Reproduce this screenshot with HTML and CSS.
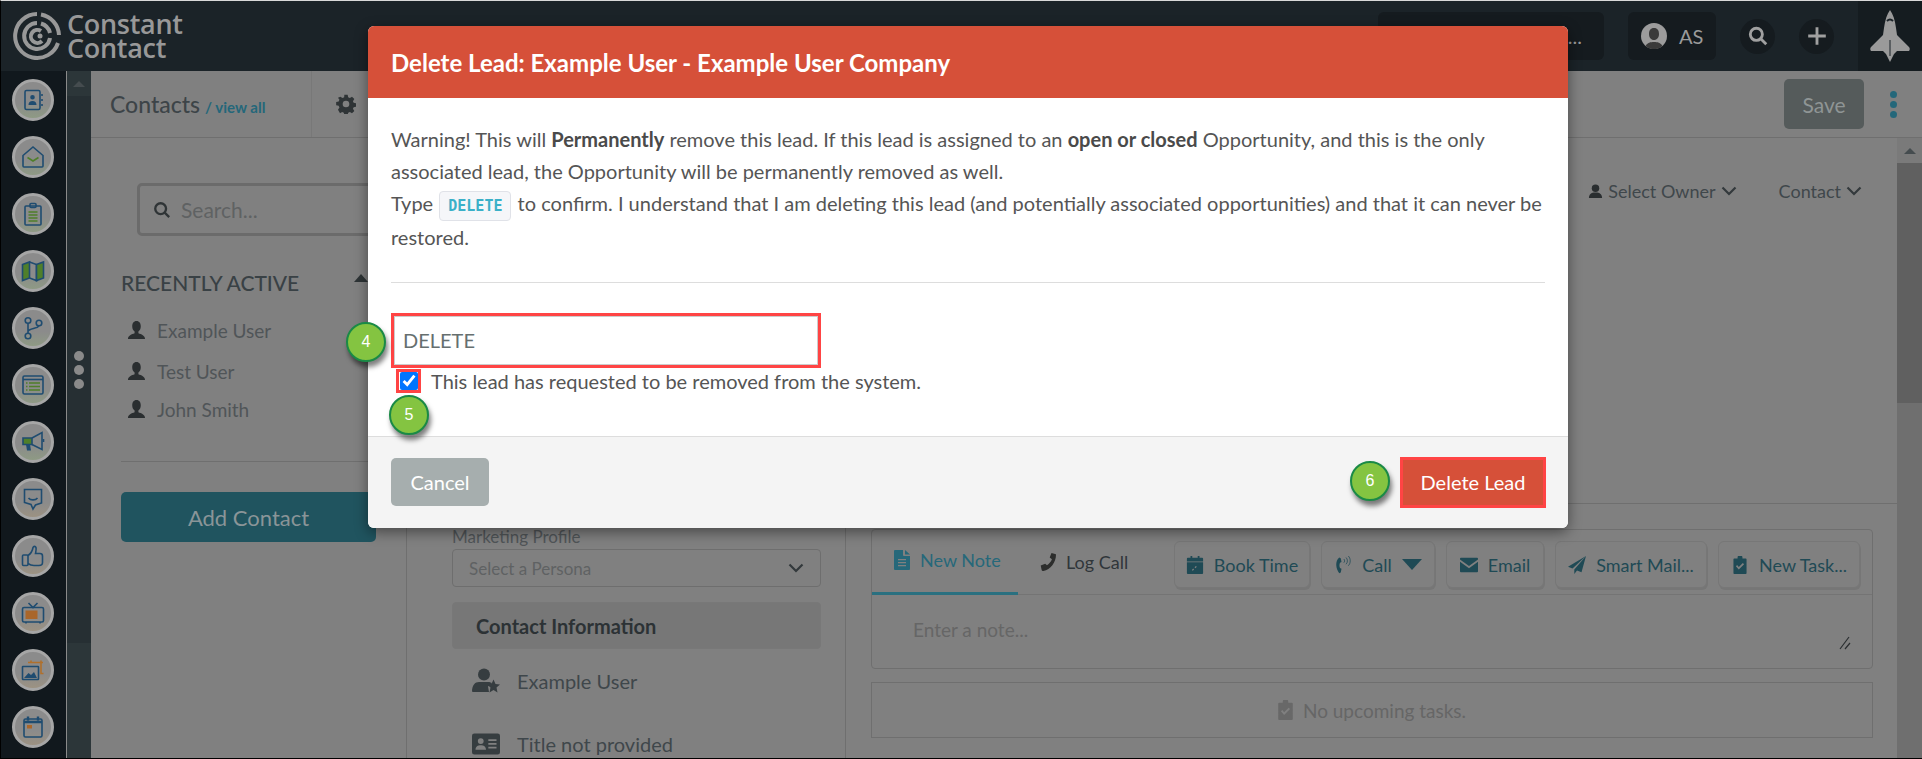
FILE: index.html
```html
<!DOCTYPE html>
<html lang="en">
<head>
    <meta charset="UTF-8">
    <meta name="viewport" content="width=device-width, initial-scale=1.0">
    <title>Delete Lead</title>
    <link rel="stylesheet" href="styles.css">
</head>
<body>
<div class="app">
    <header class="topbar">
        <div class="logo">
            <svg class="logo-mark" viewBox="0 0 50 50">
                <path d="M25 3 A22 22 0 1 0 46 32" />
                <path d="M29 3.500 A22 22 0 0 1 47 24" />
                <path d="M25 12 A13 13 0 1 0 38 27" />
                <path d="M29 12.500 A13 13 0 0 1 38 22" />
                <path d="M29 20 A6.500 6.500 0 1 0 30 30" />
                <circle class="logo-dot" cx="28" cy="25" r="2.500" />
            </svg>
            <div class="logo-text">Constant<br>Contact</div>
        </div>
        <div class="top-box top-search">...</div>
        <div class="top-box top-user">
            <svg class="avatar" viewBox="0 0 26 26">
                <circle cx="13" cy="13" r="13" fill="#9c9c9c" />
                <path d="M13 5c-3.500 0-5 2.500-5 6s2 6 5 6 5-2.500 5-6-1.500-6-5-6zM4.500 23c2-3.500 5-4 8.500-4s6.500.5 8.500 4a13 13 0 0 1-17 0z" fill="#3a3a3a" />
            </svg>
            AS
        </div>
        <div class="top-round">
            <svg viewBox="0 0 20 20"><circle cx="8.500" cy="8.500" r="5.500" /><path d="M12.500 12.500 L17.500 17.500" /></svg>
        </div>
        <div class="top-round">
            <svg viewBox="0 0 20 20"><path d="M10 2 V18 M2 10 H18" /></svg>
        </div>
        <div class="rocket">
            <svg viewBox="0 0 40 52">
                <path d="M20 0c3 4 5 10 6 18l1 7 12 12c1 1 1 3 0 4H27l-3 3-4 8-4-8-3-3H1c-1-1-1-3 0-4l12-12 1-7c1-8 3-14 6-18z" fill="#9a9a9a" />
                <path d="M17 11 Q20 8 23 11" stroke="#1b2328" stroke-width="2" fill="none" />
                <path d="M20 30 V46" stroke="#1b2328" stroke-width="1" />
            </svg>
        </div>
    </header>

    <div class="workspace">
        <nav class="rail">
            <a class="nav-btn tint-g"><svg viewBox="0 0 24 24"><rect x="4" y="2.500" width="15" height="19" rx="1.500" /><path class="solid" d="M11.500 7a2.300 2.300 0 1 1 0 4.600 2.300 2.300 0 0 1 0-4.600zM7.500 17c0-2.500 1.500-4 4-4s4 1.500 4 4z" /><path d="M21 6v2M21 11v2M21 16v2" /></svg></a>
            <a class="nav-btn tint-g"><svg viewBox="0 0 24 24"><path d="M2 10.500 L12 2 L22 10.500 V21 a1 1 0 0 1-1 1 H3 a1 1 0 0 1-1-1 Z" /><path class="acc-g" d="M6.500 12.500 L12 16 L17.500 12.500" /></svg></a>
            <a class="nav-btn tint-g"><svg viewBox="0 0 24 24"><rect x="4" y="4" width="16" height="19" rx="1" /><rect x="9" y="1.500" width="6" height="4" rx="1" /><path class="acc-g" d="M7.500 10h9M7.500 13h9M7.500 16h9M7.500 19h9" /></svg></a>
            <a class="nav-btn tint-g"><svg viewBox="0 0 24 24"><path class="fill-g" d="M1.500 5.500 L8.500 3 V19 L1.500 21.500 Z" /><path d="M8.500 3 L15.500 5.500 V21.500 L8.500 19" /><path class="fill-g" d="M15.500 5.500 L22.500 3 V19 L15.500 21.500 Z" /></svg></a>
            <a class="nav-btn tint-g"><svg viewBox="0 0 24 24"><circle cx="7" cy="4.500" r="2.800" /><circle cx="7" cy="20" r="2.800" /><circle cx="18" cy="7" r="2.800" /><path d="M7 7.300 V17.200 M7 15.500 C8 12 16 13 18 9.800" /></svg></a>
            <a class="nav-btn tint-g"><svg viewBox="0 0 24 24"><rect x="2" y="3" width="20" height="18" rx="1.500" /><path d="M2 6.500h20" /><path class="acc-g" d="M5 10h1.500M8 10h11M5 13.500h1.500M8 13.500h11M5 17h1.500M8 17h11" /></svg></a>
            <a class="nav-btn tint-g"><svg viewBox="0 0 24 24"><path d="M11 8 L21 2.500 V19.500 L11 14.500" /><path class="fill-g" d="M2 8h9v6.500H2z" /><path class="solid" d="M5 14.500h4l1 6H6z" /><path d="M22.500 9v3" /></svg></a>
            <a class="nav-btn tint-o"><svg viewBox="0 0 24 24"><path d="M3.500 2.500h17v13.500l-6 2-2.500 4-2-4.500-6.500-2z" /><path d="M8 7.500v.1M16 7.500v.1M7.500 11c2 2.500 7 2.500 9 0" /></svg></a>
            <a class="nav-btn tint-o"><svg viewBox="0 0 24 24"><rect x="1.500" y="11" width="5.500" height="10.500" rx="1" /><path d="M7 19.500c2 1.500 3 2 6 2h5c2 0 3.500-1 3.500-3V12c0-1.500-1-2.500-2.500-2.500h-4.500c.5-2.500 1-4 .5-6-.5-1.500-2.500-1.500-3 0-.5 3-2 6-5 8" /></svg></a>
            <a class="nav-btn tint-o"><svg viewBox="0 0 24 24"><path d="M7.500 2 L12 6.500 L16.500 2" /><rect x="1.500" y="6.500" width="21" height="14.500" rx="1.500" /><rect class="fill-o" x="4.500" y="9.500" width="12" height="8.500" /><path d="M19.500 10v.1M19.500 13v.1M19.500 16v.1M5 21v1.500M19 21v1.500" /></svg></a>
            <a class="nav-btn tint-o"><svg viewBox="0 0 24 24"><path class="acc-o" d="M7 4.500h15M20 2.500v13h2.500M10 2.500v2" /><rect x="1.500" y="8.500" width="16" height="13" rx=".5" /><path class="solid" d="M3 20l4.500-5 2.500 2 3-3 3 6z" /></svg></a>
            <a class="nav-btn tint-o"><svg viewBox="0 0 24 24"><rect x="3" y="4" width="18" height="18" rx="1.500" /><path d="M7 1.500v4M17 1.500v4M3 7h18" stroke-width="2.400" /><rect class="fill-o" x="6" y="10" width="5" height="3.500" /></svg></a>
        </nav>

        <div class="rail-scroll">
            <div class="rail-cap"><span class="tri-up"></span></div>
            <div class="rail-handle"><span></span><span></span><span></span></div>
            <div class="rail-cap rail-cap-bottom"></div>
        </div>

        <main class="content">
            <div class="content-head">
                <div class="contacts-title">Contacts <a>/ view all</a></div>
                <svg class="gear" viewBox="0 0 24 24"><path d="M10 1h4l.6 3 2 .9 2.600-1.700 2.800 2.800-1.700 2.600.9 2 3 .6v4l-3 .6-.9 2 1.700 2.600-2.800 2.800-2.600-1.700-2 .9-.6 3h-4l-.6-3-2-.9-2.600 1.700L2.400 18.800l1.700-2.600-.9-2-3-.6v-4l3-.6.9-2-1.700-2.600L5.200 3.200l2.600 1.700 2-.9zM12 8a4 4 0 1 0 0 8 4 4 0 0 0 0-8z" fill-rule="evenodd" /></svg>
                <button class="save-btn">Save</button>
                <div class="more"><span></span><span></span><span></span></div>
            </div>

            <div class="content-body">
                <aside class="contacts-col">
                    <div class="search-box">
                        <svg viewBox="0 0 20 20"><circle cx="8.500" cy="8.500" r="6" /><path d="M13 13 L18 18" /></svg>
                        <span>Search...</span>
                    </div>
                    <div class="recent-head">RECENTLY ACTIVE <span class="tri-dark"></span></div>
                    <div class="recent-row">
                        <svg viewBox="0 0 20 22"><path d="M10 1c-3 0-4.500 2.500-4.500 5.500 0 2.500 1 4.500 2.500 5.500v2c-3 1-7 2.500-7 6h18c0-3.500-4-5-7-6v-2c1.500-1 2.500-3 2.500-5.500C14.500 3.500 13 1 10 1z" /></svg>
                        Example User
                    </div>
                    <div class="recent-row recent-row-gap">
                        <svg viewBox="0 0 20 22"><path d="M10 1c-3 0-4.500 2.500-4.500 5.500 0 2.500 1 4.500 2.500 5.500v2c-3 1-7 2.500-7 6h18c0-3.500-4-5-7-6v-2c1.500-1 2.500-3 2.500-5.500C14.500 3.500 13 1 10 1z" /></svg>
                        Test User
                    </div>
                    <div class="recent-row">
                        <svg viewBox="0 0 20 22"><path d="M10 1c-3 0-4.500 2.500-4.500 5.500 0 2.500 1 4.500 2.500 5.500v2c-3 1-7 2.500-7 6h18c0-3.500-4-5-7-6v-2c1.500-1 2.500-3 2.500-5.500C14.500 3.500 13 1 10 1z" /></svg>
                        John Smith
                    </div>
                    <hr class="recent-line">
                    <button class="add-contact">Add Contact</button>
                </aside>

                <section class="profile-col">
                    <div class="field-label">Marketing Profile</div>
                    <div class="persona-select">
                        Select a Persona
                        <svg viewBox="0 0 16 10"><path d="M1.500 1.500 L8 8 L14.500 1.500" /></svg>
                    </div>
                    <div class="section-bar">Contact Information</div>
                    <div class="info-row">
                        <svg viewBox="0 0 28 26"><circle cx="12" cy="6.500" r="6" /><path d="M0 24c0-7 3-10 7-10h9c2 0 3.500.5 4 1.500l-4 3 1 5.500H1a1 1 0 0 1-1-1z" /><path d="M21.500 11.500l2 4.500 4.500.5-3.500 3 1 5-4-2.500-4 2.500 1-5-3.500-3 4.500-.5z" /></svg>
                        Example User
                    </div>
                    <div class="info-row info-row-next">
                        <svg viewBox="0 0 24 18"><path fill-rule="evenodd" d="M2 0h20a2 2 0 0 1 2 2v14a2 2 0 0 1-2 2H2a2 2 0 0 1-2-2V2a2 2 0 0 1 2-2zM7.500 4a2.500 2.500 0 1 0 0 5 2.500 2.500 0 0 0 0-5zM3 14h9c0-3-2-4-4.500-4S3 11 3 14zM14 5v1.500h7V5zM14 8.200v1.500h7V8.200zM14 11.400v1.500h7v-1.500z" /></svg>
                        Title not provided
                    </div>
                </section>

                <section class="activity-col">
                    <div class="lead-panel">
                        <div class="lead-meta">
                            <svg class="owner-icon" viewBox="0 0 16 16"><circle cx="8" cy="4.500" r="4" /><path d="M1 15c0-4 2-6 7-6s7 2 7 6z" /></svg>
                            <span>Select Owner</span>
                            <svg class="chev" viewBox="0 0 16 10"><path d="M1.500 1.500 L8 8 L14.500 1.500" /></svg>
                            <span class="lead-type">Contact</span>
                            <svg class="chev" viewBox="0 0 16 10"><path d="M1.500 1.500 L8 8 L14.500 1.500" /></svg>
                        </div>
                    </div>

                    <div class="note-card">
                        <div class="note-tabs">
                            <div class="tab tab-active">
                                <svg viewBox="0 0 16 20"><path fill-rule="evenodd" d="M0 1a1 1 0 0 1 1-1h8v5a1 1 0 0 0 1 1h6v13a1 1 0 0 1-1 1H1a1 1 0 0 1-1-1zM4 9v1.300h8V9zM4 12v1.300h8V12zM4 15v1.300h8V15z" /><path d="M11 0l5 4.500h-5z" /></svg>
                                New Note
                            </div>
                            <div class="tab tab-call">
                                <svg viewBox="0 0 20 20"><path d="M19 1l-4-1-2 5 2.500 2c-1 2.500-3 5-5.500 6.500L8 12l-5 2 1 4.500C4 19.500 5 20 6 20 14 19 20 10 20 2c0-.5-.5-1-1-1z" /></svg>
                                Log Call
                            </div>
                            <div class="tab-actions">
                                <button class="action-btn btn-book">
                                    <svg viewBox="0 0 18 20"><path fill-rule="evenodd" d="M4 0h2v2h6V0h2v2h3a1 1 0 0 1 1 1v3H0V3a1 1 0 0 1 1-1h3zM0 7h18v12a1 1 0 0 1-1 1H1a1 1 0 0 1-1-1zM7 14l-1.500 1.500 1 1L8 15zM10 11l-1.500 1.500 1 1L11 12z" /></svg>
                                    Book Time
                                </button>
                                <button class="action-btn btn-call">
                                    <svg viewBox="0 0 18 24"><path d="M6 3l-2-1C1 4 0 8 0 12s2 8 4 11l2-1 1-5-2-1c-1-2-1-5 0-7l2-1z" /><path class="line" d="M10 4c1.500 1 1.500 4 0 5M13 2c2.500 2 2.500 7 0 9M16 0c3.500 3 3.500 10 0 13" /></svg>
                                    Call
                                    <span class="tri-down"></span>
                                </button>
                                <button class="action-btn btn-email">
                                    <svg viewBox="0 0 20 16"><path d="M1 0h18a1 1 0 0 1 1 1v1l-10 7L0 2V1a1 1 0 0 1 1-1z" /><path d="M0 4.500l10 7 10-7V15a1 1 0 0 1-1 1H1a1 1 0 0 1-1-1z" /></svg>
                                    Email
                                </button>
                                <button class="action-btn btn-mail">
                                    <svg viewBox="0 0 20 20"><path d="M20 0L0 12l5 2zM20 0L7 15v5l3-4 5 2z" /></svg>
                                    Smart Mail...
                                </button>
                                <button class="action-btn btn-task">
                                    <svg viewBox="0 0 16 22"><path fill-rule="evenodd" d="M5 3V2a3 3 0 0 1 6 0v1h4a1 1 0 0 1 1 1v17a1 1 0 0 1-1 1H1a1 1 0 0 1-1-1V4a1 1 0 0 1 1-1zM3 12.500l3.500 4L13 10l-1.500-1.500-5 5L4.500 11z" /></svg>
                                    New Task...
                                </button>
                            </div>
                        </div>
                        <div class="note-entry">
                            Enter a note...
                            <svg class="resize" viewBox="0 0 12 14"><path d="M1 13 L10 1 M6 13 L11 7" /></svg>
                        </div>
                    </div>

                    <div class="tasks-box">
                        <svg viewBox="0 0 16 22"><path fill-rule="evenodd" d="M5 3V2a3 3 0 0 1 6 0v1h4a1 1 0 0 1 1 1v17a1 1 0 0 1-1 1H1a1 1 0 0 1-1-1V4a1 1 0 0 1 1-1zM3 12.500l3.500 4L13 10l-1.500-1.500-5 5L4.500 11z" /></svg>
                        No upcoming tasks.
                    </div>
                </section>

                <div class="page-scroll">
                    <div class="page-scroll-btn"><span class="tri-up"></span></div>
                    <div class="page-scroll-thumb"></div>
                </div>
            </div>
        </main>
    </div>

    <!-- Delete dialog, sits over the whole page -->
    <div class="modal">
        <div class="modal-head">Delete Lead: Example User - Example User Company</div>
        <div class="modal-body">
            <p class="warning">
                Warning! This will <b>Permanently</b> remove this lead. If this lead is assigned to an <b>open or closed</b> Opportunity, and this is the only associated lead, the Opportunity will be permanently removed as well.<br>
                Type <code>DELETE</code> to confirm. I understand that I am deleting this lead (and potentially associated opportunities) and that it can never be restored.
            </p>
            <hr class="modal-line">
            <div class="confirm-input callout">
                <span class="badge badge-4">4</span>
                <input type="text" value="DELETE">
            </div>
            <div class="confirm-check">
                <span class="check-box callout">
                    <span class="badge badge-5">5</span>
                    <input type="checkbox" id="requested" checked>
                </span>
                <label for="requested">This lead has requested to be removed from the system.</label>
            </div>
        </div>
        <div class="modal-foot">
            <button class="cancel-btn">Cancel</button>
            <div class="delete-wrap">
                <span class="badge badge-6">6</span>
                <button class="delete-btn">Delete Lead</button>
            </div>
        </div>
    </div>
</div>
</body>
</html>
```

FILE: styles.css
```css
:root {
    --top-bg: #1b2328;
    --top-box: #151b1f;
    --rail-bg: #11181d;
    --rail-scroll: #262f33;
    --page-bg: #808080;
    --line: #6f6f6f;
    --text: #3d4448;
    --text-soft: #505558;
    --text-faint: #5f6263;
    --teal: #2a7080;
    --teal-dark: #1f4a55;
    --navy: #1f4c70;
    --red: #d65039;
    --callout: #ff4444;
}

* {
    box-sizing: border-box;
}

body {
    margin: 0;
    width: 1922px;
    height: 759px;
    overflow: hidden;
    border-top: 1px solid #d9d9d9;
    border-left: 1px solid #000;
    border-bottom: 1px solid #000;
    font-family: "Lato", "Liberation Sans", sans-serif;
    color: var(--text);
    background: var(--page-bg);
}

svg {
    display: block;
    flex: none;
}

.app {
    position: relative;
    height: 100%;
    display: flex;
    flex-direction: column;
    overflow: hidden;
}

/* Top bar */
.topbar {
    height: 70px;
    flex: none;
    display: flex;
    align-items: center;
    background: var(--top-bg);
}

.logo {
    display: flex;
    align-items: center;
    margin-left: 11px;
    gap: 5px;
}

.logo-mark {
    width: 50px;
    height: 50px;
    fill: none;
    stroke: #989898;
    stroke-width: 4;
}

.logo-mark .logo-dot {
    fill: #989898;
    stroke: none;
}

.logo-text {
    font-family: "Open Sans", sans-serif;
    font-size: 27px;
    line-height: 24px;
    font-weight: 600;
    color: #989898;
    letter-spacing: -0.3px;
}

.top-box {
    height: 48px;
    border-radius: 6px;
    background: var(--top-box);
    display: flex;
    align-items: center;
    color: #9a9a9a;
}

.top-search {
    width: 226px;
    margin-left: auto;
    justify-content: flex-end;
    padding-right: 22px;
    font-size: 20px;
}

.top-user {
    width: 88px;
    margin-left: 24px;
    padding-left: 13px;
    gap: 12px;
    font-size: 20px;
}

.avatar {
    width: 26px;
    height: 26px;
}

.top-round {
    width: 35px;
    height: 35px;
    margin-left: 24px;
    border-radius: 50%;
    background: var(--top-box);
    display: flex;
    align-items: center;
    justify-content: center;
}

.top-round svg {
    width: 22px;
    height: 22px;
    fill: none;
    stroke: #a0a0a0;
    stroke-width: 2.6;
}

.rocket {
    width: 64px;
    height: 100%;
    margin-left: 24px;
    background: #151c20;
    display: flex;
    align-items: center;
    justify-content: center;
}

.rocket svg {
    width: 40px;
    height: 52px;
}

/* Left navigation */
.workspace {
    flex: 1;
    min-height: 0;
    display: flex;
}

.rail {
    width: 66px;
    flex: none;
    display: flex;
    flex-direction: column;
    align-items: center;
    gap: 15px;
    padding-top: 8px;
    padding-right: 1px;
    background: var(--rail-bg);
    border-right: 1px solid #8a8a8a;
}

.nav-btn {
    width: 42px;
    height: 42px;
    flex: none;
    border-radius: 50%;
    border: 3px solid #a6a6a6;
    display: flex;
    align-items: center;
    justify-content: center;
}

.tint-g {
    background: linear-gradient(#8b8b8b, #8b8b8b 60%, #8e9a84);
}

.tint-o {
    background: linear-gradient(#8b8b8b, #8b8b8b 60%, #9c9282);
}

.nav-btn svg {
    width: 24px;
    height: 24px;
    fill: none;
    stroke: var(--navy);
    stroke-width: 1.6;
}

.nav-btn .solid {
    fill: var(--navy);
    stroke: none;
}

.nav-btn .acc-g {
    stroke: #4f7f2a;
}

.nav-btn .acc-o {
    stroke: #b0702c;
}

.nav-btn .fill-g {
    fill: #4f7f2a;
}

.nav-btn .fill-o {
    fill: #a9662a;
    stroke: none;
}

.rail-scroll {
    width: 24px;
    flex: none;
    display: flex;
    flex-direction: column;
    background: var(--rail-scroll);
}

.rail-cap {
    height: 25px;
    flex: none;
    background: #2c3639;
    display: flex;
    align-items: center;
    justify-content: center;
}

.rail-cap-bottom {
    flex: 1;
}

.rail-handle {
    flex: 1;
    display: flex;
    flex-direction: column;
    align-items: center;
    justify-content: center;
    gap: 4px;
}

.rail-handle span {
    width: 10px;
    height: 10px;
    border-radius: 50%;
    background: #8a8a8a;
}

.rail-cap-bottom {
    flex: none;
    height: 115px;
}

.tri-up {
    width: 0;
    height: 0;
    border-left: 6px solid transparent;
    border-right: 6px solid transparent;
    border-bottom: 6px solid #454c4f;
}

/* Main area */
.content {
    flex: 1;
    min-width: 0;
    display: flex;
    flex-direction: column;
}

.content-head {
    height: 67px;
    flex: none;
    display: flex;
    align-items: center;
    border-bottom: 1px solid var(--line);
}

.contacts-title {
    width: 221px;
    height: 100%;
    display: flex;
    align-items: center;
    gap: 5px;
    padding-left: 19px;
    border-right: 1px solid #787878;
    font-size: 23px;
    font-weight: 500;
    color: var(--text);
}

.contacts-title a {
    font-size: 15px;
    font-weight: 700;
    color: #24677a;
    padding-top: 5px;
}

.gear {
    width: 20px;
    height: 20px;
    margin-left: 24px;
    fill: #2f3436;
}

.save-btn {
    margin-left: auto;
    width: 80px;
    height: 50px;
    border: 0;
    border-radius: 5px;
    background: #555b5b;
    color: #8f9595;
    font-family: inherit;
    font-size: 21px;
}

.more {
    width: 58px;
    display: flex;
    flex-direction: column;
    align-items: center;
    gap: 3px;
}

.more span {
    width: 7px;
    height: 7px;
    border-radius: 50%;
    background: #24677a;
}

.content-body {
    flex: 1;
    min-height: 0;
    display: flex;
}

/* Contact list column */
.contacts-col {
    width: 316px;
    flex: none;
    padding: 45px 30px 0;
    border-right: 1px solid var(--line);
}

.search-box {
    height: 53px;
    width: 255px;
    margin-left: 16px;
    padding-left: 13px;
    display: flex;
    align-items: center;
    gap: 10px;
    border: 3px solid #6b6b6b;
    border-radius: 5px;
    font-size: 21px;
    color: var(--text-faint);
}

.search-box svg {
    width: 18px;
    height: 18px;
    fill: none;
    stroke: #2f3436;
    stroke-width: 2.6;
}

.recent-head {
    margin-top: 31px;
    height: 30px;
    width: 247px;
    display: flex;
    align-items: center;
    justify-content: space-between;
    font-size: 21px;
    font-weight: 500;
    color: #394145;
}

.tri-dark {
    width: 0;
    height: 0;
    border-left: 7px solid transparent;
    border-right: 7px solid transparent;
    border-bottom: 8px solid #2e3436;
    margin-bottom: 8px;
}

.recent-row {
    height: 38px;
    display: flex;
    align-items: center;
    gap: 11px;
    padding-left: 6px;
    font-size: 19px;
    color: var(--text-soft);
}

.recent-head + .recent-row {
    margin-top: 14px;
}

.recent-row-gap {
    margin-top: 3px;
}

.recent-row svg {
    width: 19px;
    height: 21px;
    fill: #2a2e30;
}

.recent-line {
    margin: 33px 0 30px;
    border: 0;
    border-top: 1px solid var(--line);
}

.add-contact {
    width: 255px;
    height: 50px;
    border: 0;
    border-radius: 5px;
    background: #20545f;
    color: #8a9598;
    font-family: inherit;
    font-size: 22px;
}

/* Middle column */
.profile-col {
    width: 439px;
    flex: none;
    padding: 387px 24px 0 45px;
    border-right: 1px solid var(--line);
}

.field-label {
    height: 24px;
    line-height: 24px;
    font-size: 17px;
    color: var(--text-soft);
}

.persona-select {
    height: 38px;
    padding: 0 16px;
    display: flex;
    align-items: center;
    justify-content: space-between;
    border: 1px solid #6e6e6e;
    border-radius: 4px;
    font-size: 17px;
    color: var(--text-faint);
}

.persona-select svg,
.chev {
    width: 16px;
    height: 10px;
    fill: none;
    stroke: #33393c;
    stroke-width: 2.2;
}

.section-bar {
    height: 47px;
    margin-top: 15px;
    padding-left: 23px;
    display: flex;
    align-items: center;
    border: 1px solid #787878;
    border-radius: 4px;
    background: #777;
    font-size: 20px;
    font-weight: 700;
    color: #2c3235;
}

.info-row {
    margin-top: 12px;
    height: 40px;
    display: flex;
    align-items: center;
    gap: 17px;
    padding-left: 20px;
    font-size: 20px;
    color: #3f474b;
}

.info-row svg {
    width: 28px;
    height: 26px;
    fill: #363d40;
}

.info-row-next {
    margin-top: 23px;
}

/* Right column */
.activity-col {
    flex: 1;
    min-width: 0;
}

.lead-panel {
    height: 366px;
    padding-top: 42px;
    border-bottom: 1px solid var(--line);
}

.lead-meta {
    display: flex;
    align-items: center;
    justify-content: flex-end;
    gap: 5px;
    padding-right: 35px;
    font-size: 18px;
    color: #3f474b;
}

.owner-icon {
    width: 15px;
    height: 15px;
    fill: #2a2e30;
}

.lead-type {
    margin-left: 37px;
}

.note-card {
    margin: 25px 24px 0 25px;
    height: 140px;
    border: 1px solid var(--line);
    border-radius: 4px;
}

.note-tabs {
    height: 65px;
    display: flex;
    border-bottom: 1px solid #747474;
}

.tab {
    height: 65px;
    display: flex;
    align-items: center;
    gap: 10px;
    font-size: 18px;
}

.tab svg {
    width: 16px;
    height: 20px;
}

.tab-active {
    width: 146px;
    padding: 0 0 2px 22px;
    border-bottom: 3px solid var(--teal);
    color: #26687a;
}

.tab-active svg {
    fill: #26687a;
}

.tab-call {
    margin-left: 20px;
    padding-bottom: 2px;
    color: #30363a;
}

.tab-call svg {
    width: 18px;
    height: 18px;
    fill: #2c2d2c;
}

.tab-actions {
    margin-left: auto;
    padding: 11px 12px 0 0;
    display: flex;
    gap: 11px;
}

.action-btn {
    height: 47px;
    padding: 0;
    display: flex;
    align-items: center;
    justify-content: center;
    gap: 10px;
    border: 1px solid #777;
    border-radius: 6px;
    box-shadow: 1px 2px 0 #767676;
    background: #808080;
    font-family: inherit;
    font-size: 18px;
    color: var(--teal-dark);
}

.action-btn svg {
    height: 18px;
    width: 18px;
    fill: var(--teal-dark);
}

.btn-book { width: 136px; }
.btn-call { width: 114px; }
.btn-email { width: 98px; }
.btn-mail { width: 152px; }
.btn-task { width: 142px; }

.btn-call .line {
    fill: none;
    stroke: var(--teal-dark);
    stroke-width: 1;
}

.tri-down {
    width: 0;
    height: 0;
    border-left: 10px solid transparent;
    border-right: 10px solid transparent;
    border-top: 11px solid var(--teal-dark);
}

.note-entry {
    position: relative;
    padding: 23px 0 0 41px;
    font-size: 19px;
    color: #666;
}

.resize {
    position: absolute;
    right: 21px;
    top: 41px;
    width: 12px;
    height: 14px;
    fill: none;
    stroke: #2a2e30;
    stroke-width: 1.2;
}

.tasks-box {
    margin: 13px 24px 0 25px;
    height: 56px;
    display: flex;
    align-items: center;
    justify-content: center;
    gap: 10px;
    border: 1px solid var(--line);
    font-size: 19px;
    color: #666;
}

.tasks-box svg {
    width: 15px;
    height: 20px;
    fill: #686868;
}

.page-scroll {
    width: 25px;
    flex: none;
    background: #6f6f6f;
}

.page-scroll-btn {
    height: 25px;
    display: flex;
    align-items: center;
    justify-content: center;
    background: #7a7a7a;
}

.page-scroll-thumb {
    height: 240px;
    background: #606060;
}

/* Delete dialog */
.modal {
    position: absolute;
    left: 367px;
    top: 25px;
    width: 1200px;
    border-radius: 6px;
    background: #fff;
    overflow: visible;
    box-shadow: 0 4px 14px rgba(0, 0, 0, 0.45);
}

.modal-head {
    height: 72px;
    padding-left: 23px;
    display: flex;
    align-items: center;
    border-radius: 6px 6px 0 0;
    background: var(--red);
    color: #fff;
    font-size: 24px;
    font-weight: 700;
}

.modal-body {
    padding: 25px 23px 43px;
}

.warning {
    margin: 0;
    font-size: 20px;
    line-height: 32px;
    color: #555;
}

.warning b {
    color: #4a4a4a;
}

code {
    display: inline-block;
    height: 30px;
    line-height: 28px;
    padding: 0 8px;
    margin: 0 1px;
    border: 1px solid #e0e2e8;
    border-radius: 4px;
    background: #f5f6f9;
    color: #3ab0c8;
    font-family: "DejaVu Sans Mono", monospace;
    font-size: 15px;
    font-weight: 700;
    vertical-align: middle;
}

.modal-line {
    margin: 29px 0 30px;
    border: 0;
    border-top: 1px solid #ddd;
}

.callout {
    position: relative;
    display: block;
    border: 3px solid var(--callout);
}

.confirm-input {
    width: 430px;
    height: 55px;
}

.confirm-input input {
    width: 100%;
    height: 100%;
    padding: 0 8px;
    border: 1px solid #ccc;
    outline: 0;
    font-family: inherit;
    font-size: 20px;
    color: #666f6f;
}

.confirm-check {
    margin: 1px 0 0 5px;
    display: flex;
    align-items: center;
    gap: 10px;
    font-size: 20px;
    color: #555;
}

.check-box {
    width: 25px;
    height: 24px;
    display: flex;
    align-items: center;
    justify-content: center;
}

.check-box input {
    width: 18px;
    height: 18px;
    margin: 0;
    accent-color: #0075ff;
}

.modal-foot {
    height: 92px;
    padding: 0 22px 0 23px;
    display: flex;
    align-items: center;
    justify-content: space-between;
    border-top: 1px solid #ddd;
    border-radius: 0 0 6px 6px;
    background: #f4f4f4;
}

.cancel-btn {
    width: 98px;
    height: 48px;
    border: 0;
    border-radius: 5px;
    background: #a6aeae;
    color: #fff;
    font-family: inherit;
    font-size: 20px;
}

.delete-wrap {
    position: relative;
}

.delete-btn {
    display: block;
    width: 146px;
    height: 51px;
    border: 3px solid var(--callout);
    background: var(--red);
    color: #fff;
    font-family: inherit;
    font-size: 20px;
}

/* Step markers */
.badge {
    position: absolute;
    width: 40px;
    height: 40px;
    display: flex;
    align-items: center;
    justify-content: center;
    border: 2px solid #1a8a46;
    border-radius: 50%;
    background: #84c441;
    box-shadow: 2px 5px 5px rgba(0, 0, 0, 0.5);
    color: #fff;
    font-family: "Liberation Sans", sans-serif;
    font-size: 16px;
}

.badge-4 {
    left: -48px;
    top: 6px;
}

.badge-5 {
    left: -10px;
    top: 23px;
}

.badge-6 {
    left: -50px;
    top: 4px;
}
```
